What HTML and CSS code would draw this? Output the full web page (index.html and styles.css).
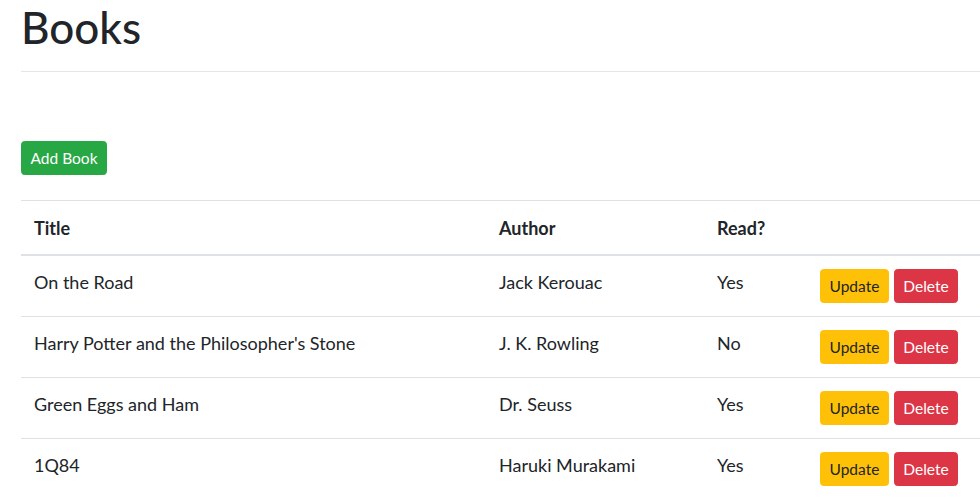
FILE: index.html
```html
<!DOCTYPE html>
<html lang="en">
<head>
<meta charset="utf-8">
<title>Books</title>
<link rel="stylesheet" href="styles.css">
</head>
<body>
<div class="page">
  <h1 class="title">Books</h1>
  <hr class="rule">
  <div class="toolbar">
    <button class="btn btn-success">Add Book</button>
  </div>
  <table class="books">
    <colgroup>
      <col class="c-title">
      <col class="c-author">
      <col class="c-read">
      <col class="c-actions">
    </colgroup>
    <thead>
      <tr><th>Title</th><th>Author</th><th>Read?</th><th></th></tr>
    </thead>
    <tbody>
      <tr>
        <td>On the Road</td><td>Jack Kerouac</td><td>Yes</td>
        <td><div class="actions"><button class="btn btn-warning">Update</button><button class="btn btn-danger">Delete</button></div></td>
      </tr>
      <tr>
        <td>Harry Potter and the Philosopher's Stone</td><td>J. K. Rowling</td><td>No</td>
        <td><div class="actions"><button class="btn btn-warning">Update</button><button class="btn btn-danger">Delete</button></div></td>
      </tr>
      <tr>
        <td>Green Eggs and Ham</td><td>Dr. Seuss</td><td>Yes</td>
        <td><div class="actions"><button class="btn btn-warning">Update</button><button class="btn btn-danger">Delete</button></div></td>
      </tr>
      <tr>
        <td>1Q84</td><td>Haruki Murakami</td><td>Yes</td>
        <td><div class="actions"><button class="btn btn-warning">Update</button><button class="btn btn-danger">Delete</button></div></td>
      </tr>
    </tbody>
  </table>
</div>
</body>
</html>
```

FILE: styles.css
```css
html, body {
  margin: 0;
  padding: 0;
  background: #fff;
  overflow: hidden;
}
body {
  font-family: Lato, "Open Sans", sans-serif;
  font-size: 18px;
  line-height: 27px;
  color: #212529;
}
.page {
  padding-left: 21px;
  overflow: hidden;
}
.title {
  margin: 0;
  font-size: 44px;
  line-height: 54px;
  font-weight: 500;
}
.rule {
  margin: 17px 0 0;
  border: 0;
  border-top: 1px solid rgba(0, 0, 0, 0.1);
  height: 0;
}
.toolbar {
  padding-top: 69px;
  padding-bottom: 25px;
  line-height: 0;
}
.btn {
  display: inline-flex;
  align-items: center;
  justify-content: center;
  box-sizing: border-box;
  height: 34px;
  font-family: inherit;
  font-size: 15.5px;
  line-height: 23px;
  padding: 0 8.5px;
  border: 1px solid transparent;
  border-radius: 3.6px;
  cursor: pointer;
}
.btn-success {
  background: #28a745;
  border-color: #28a745;
  color: #fff;
}
.btn-warning {
  background: #ffc107;
  border-color: #ffc107;
  color: #212529;
}
.btn-danger {
  background: #dc3545;
  border-color: #dc3545;
  color: #fff;
}
.books {
  border-collapse: collapse;
  table-layout: fixed;
  width: 1020px;
}
.c-title { width: 465px; }
.c-author { width: 218px; }
.c-read { width: 103px; }
.books th {
  text-align: left;
  font-weight: 700;
  padding: 14px 13px 12px;
  border-top: 1px solid #dee2e6;
  border-bottom: 2px solid #dee2e6;
  vertical-align: top;
}
.books td {
  padding: 13px 13px 13px;
  border-top: 1px solid #dee2e6;
  vertical-align: top;
}
.actions {
  display: flex;
  gap: 5px;
}
```
